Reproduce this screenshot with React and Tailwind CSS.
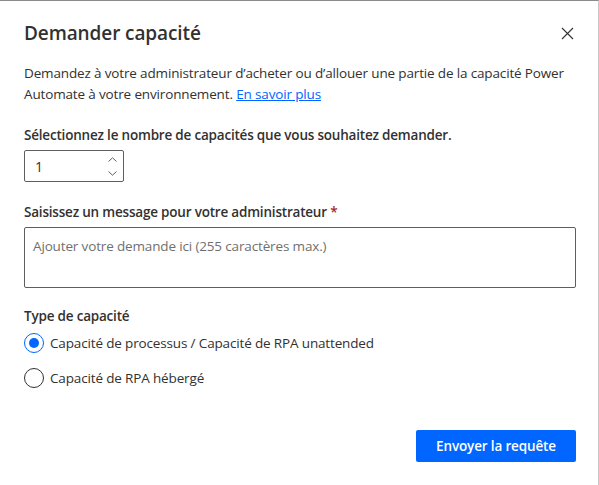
export default function App() {
  const font = { fontFamily: '"Open Sans", "Noto Sans", sans-serif' };
  return (
    <div
      className="w-[599px] h-[485px] bg-white border-t border-t-[#8a8a8a] border-r border-r-[#c8c8c8] flex flex-col pl-6 pr-[22px] text-[#323130]"
      style={font}
    >
      <div className="pt-[18px] flex items-center justify-between h-[46px]">
        <h1 className="text-[19px] leading-[28px] font-semibold tracking-[-0.1px]">Demander capacité</h1>
        <svg width="13" height="13" viewBox="0 0 13 13" className="mr-[2px]">
          <path d="M1 1 L12 12 M12 1 L1 12" stroke="#323130" strokeWidth="1.1" />
        </svg>
      </div>
      <p className="mt-[16px] text-[13.5px] leading-[21px] tracking-[-0.15px]">
        Demandez à votre administrateur d’acheter ou d’allouer une partie de la capacité Power
        <br />
        Automate à votre environnement.{" "}
        <a className="text-[#0066ff] underline">En savoir plus</a>
      </p>
      <div className="mt-[20px] text-[13.5px] leading-[20px] font-semibold tracking-[-0.2px]">
        Sélectionnez le nombre de capacités que vous souhaitez demander.
      </div>
      <div className="mt-[5px] w-[100px] h-[32px] border border-[#605e5c] rounded-[2px] flex items-center justify-between pl-[10px] pr-[6px] shrink-0">
        <span className="text-[14px]">1</span>
        <div className="flex flex-col items-center gap-[9px]">
          <svg width="9" height="5" viewBox="0 0 9 5">
            <path d="M0.5 4.5 L4.5 0.8 L8.5 4.5" fill="none" stroke="#605e5c" strokeWidth="1" />
          </svg>
          <svg width="9" height="5" viewBox="0 0 9 5">
            <path d="M0.5 0.5 L4.5 4.2 L8.5 0.5" fill="none" stroke="#605e5c" strokeWidth="1" />
          </svg>
        </div>
      </div>
      <div className="mt-[20px] text-[13.5px] leading-[20px] font-semibold tracking-[-0.2px]">
        Saisissez un message pour votre administrateur <span className="text-[#a4262c]">*</span>
      </div>
      <div className="mt-[5px] h-[61px] border border-[#605e5c] rounded-[2px] px-[8px] pt-[5px] shrink-0">
        <span className="text-[13.5px] leading-[20px] text-[#707070] tracking-[-0.15px]">
          Ajouter votre demande ici (255 caractères max.)
        </span>
      </div>
      <div className="mt-[18px] text-[13.5px] leading-[20px] font-semibold tracking-[-0.2px]">Type de capacité</div>
      <div className="mt-[7px] flex items-center h-[20px]">
        <div className="w-[20px] h-[20px] rounded-full border border-[#0066ff] flex items-center justify-center">
          <div className="w-[10px] h-[10px] rounded-full bg-[#0066ff]" />
        </div>
        <span className="ml-[6px] text-[13.5px] tracking-[-0.15px]">
          Capacité de processus / Capacité de RPA unattended
        </span>
      </div>
      <div className="mt-[15px] flex items-center h-[20px]">
        <div className="w-[20px] h-[20px] rounded-full border border-[#323130]" />
        <span className="ml-[6px] text-[13.5px] tracking-[-0.15px]">Capacité de RPA hébergé</span>
      </div>
      <div className="mt-[42px] flex justify-end">
        <button className="w-[160px] h-[32px] rounded-[2px] bg-[#0066ff] text-white text-[13.5px] font-semibold tracking-[-0.15px]">
          Envoyer la requête
        </button>
      </div>
    </div>
  );
}
